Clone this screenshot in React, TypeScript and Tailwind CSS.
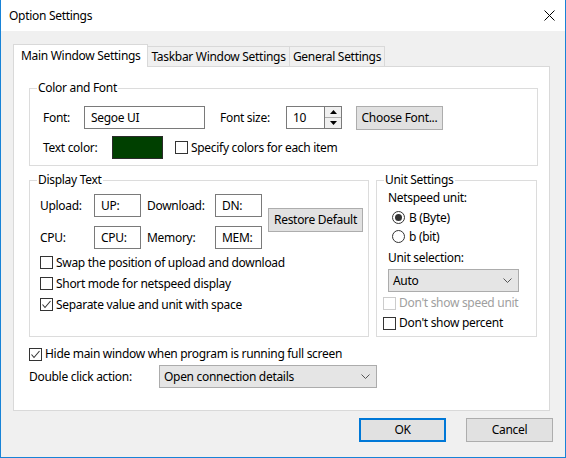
import React from "react";

const font = { fontFamily: '"Noto Sans", "Segoe UI", Arial, sans-serif' };

function CheckBox({ checked = false, disabled = false }: { checked?: boolean; disabled?: boolean }) {
  return (
    <span
      className={`w-[13px] h-[13px] shrink-0 border bg-white flex items-center justify-center ${
        disabled ? "border-[#cccccc]" : "border-[#333333]"
      }`}
    >
      {checked && (
        <svg width="11" height="11" viewBox="0 0 11 11">
          <polyline points="1.5,5.5 4,8.5 9.5,2" fill="none" stroke="#333" strokeWidth="1.1" />
        </svg>
      )}
    </span>
  );
}

function CheckRow({
  label,
  checked = false,
  disabled = false,
  className = "",
}: {
  label: string;
  checked?: boolean;
  disabled?: boolean;
  className?: string;
}) {
  return (
    <div className={`flex items-center gap-[3px] ${className}`}>
      <CheckBox checked={checked} disabled={disabled} />
      <span className={disabled ? "text-[#a0a0a0]" : "text-black"}>{label}</span>
    </div>
  );
}

function Radio({ label, checked = false }: { label: string; checked?: boolean }) {
  return (
    <div className="flex items-center gap-[4px] h-[19px]">
      <span className="w-[13px] h-[13px] rounded-full border border-[#333333] bg-white flex items-center justify-center">
        {checked && <span className="w-[7px] h-[7px] rounded-full bg-[#333333]" />}
      </span>
      <span>{label}</span>
    </div>
  );
}

function TextBox({ value, w }: { value: string; w: string }) {
  return (
    <div className={`${w} h-[23px] border border-[#7a7a7a] bg-white flex items-center pl-[6px]`}>{value}</div>
  );
}

function Chevron() {
  return (
    <svg width="9" height="5" viewBox="0 0 9 5">
      <polyline points="0.5,0.5 4.5,4.5 8.5,0.5" fill="none" stroke="#555" strokeWidth="1" />
    </svg>
  );
}

function Select({ value, w }: { value: string; w: string }) {
  return (
    <div
      className={`${w} h-[23px] border border-[#acacac] bg-[#e5e5e5] flex items-center justify-between pl-[4px] pr-[6px]`}
    >
      <span>{value}</span>
      <Chevron />
    </div>
  );
}

function Button({ label, w, primary = false }: { label: string; w: string; primary?: boolean }) {
  return (
    <div
      className={`${w} h-[24px] bg-[#e1e1e1] flex items-center justify-center ${
        primary ? "border-2 border-[#0078d7]" : "border border-[#adadad]"
      }`}
    >
      {label}
    </div>
  );
}

function Group({ title, className, children }: { title: string; className: string; children: React.ReactNode }) {
  return (
    <div className={`relative border border-[#dcdcdc] ${className}`}>
      <span className="absolute -top-[9px] left-[7px] bg-white px-[1px] leading-[16px]">{title}</span>
      {children}
    </div>
  );
}

export default function App() {
  return (
    <div
      style={font}
      className="w-[566px] h-[458px] flex flex-col bg-[#f0f0f0] border-x border-b border-[#1883d7] text-[12px] tracking-[-0.3px] whitespace-nowrap text-black overflow-hidden"
    >
      {/* Title bar */}
      <div className="h-[31px] bg-white flex items-center justify-between pl-[8px] pr-[10px] shrink-0">
        <span>Option Settings</span>
        <svg width="11" height="11" viewBox="0 0 11 11">
          <line x1="0.5" y1="0.5" x2="10.5" y2="10.5" stroke="#000" strokeWidth="1" />
          <line x1="10.5" y1="0.5" x2="0.5" y2="10.5" stroke="#000" strokeWidth="1" />
        </svg>
      </div>

      <div className="px-[12px] pt-[13px] flex flex-col">
        {/* Tabs */}
        <div className="h-[22px] flex items-end">
          <div className="relative z-10 -mb-px h-[23px] w-[135px] bg-white border-t border-x border-[#d9d9d9] flex items-center pl-[7px]">
            Main Window Settings
          </div>
          <div className="h-[20px] w-[142px] border-t border-r border-[#d9d9d9] flex items-center justify-center">
            Taskbar Window Settings
          </div>
          <div className="h-[20px] w-[95px] border-t border-r border-[#d9d9d9] flex items-center justify-center">
            General Settings
          </div>
        </div>

        {/* Tab panel */}
        <div className="w-[537px] h-[345px] bg-white border border-[#d9d9d9] pl-[15px] pt-[21px] flex flex-col">
          <Group title="Color and Font" className="w-[509px] h-[78px] pl-[13px] pt-[17px] flex flex-col gap-[7px]">
            <div className="h-[23px] flex items-center">
              <span className="w-[41px]">Font:</span>
              <TextBox value="Segoe UI" w="w-[121px]" />
              <span className="ml-[15px] w-[66px]">Font size:</span>
              <div className="w-[39px] h-[23px] border border-[#7a7a7a] bg-white flex items-center pl-[6px]">10</div>
              <div className="w-[17px] h-[23px] flex flex-col border-y border-r border-[#7a7a7a]">
                <div className="flex-1 bg-[#f0f0f0] border-b border-[#adadad] flex items-center justify-center">
                  <svg width="7" height="4" viewBox="0 0 7 4">
                    <polygon points="0,4 7,4 3.5,0" fill="#000" />
                  </svg>
                </div>
                <div className="flex-1 bg-[#f0f0f0] flex items-center justify-center">
                  <svg width="7" height="4" viewBox="0 0 7 4">
                    <polygon points="0,0 7,0 3.5,4" fill="#000" />
                  </svg>
                </div>
              </div>
              <div className="ml-[14px]">
                <Button label="Choose Font..." w="w-[87px]" />
              </div>
            </div>
            <div className="h-[23px] flex items-center">
              <span className="w-[69px]">Text color:</span>
              <div className="w-[51px] h-[23px] bg-[#004000] border border-[#2a2a2a]" />
              <CheckRow label="Specify colors for each item" className="ml-[12px]" />
            </div>
          </Group>

          <div className="mt-[14px] flex gap-[7px]">
            <Group title="Display Text" className="w-[340px] h-[157px] pl-[10px] pt-[13px] flex flex-col">
              <div className="flex items-center">
                <div className="flex flex-col gap-[9px]">
                  <div className="flex items-center h-[23px]">
                    <span className="w-[54px]">Upload:</span>
                    <TextBox value="UP:" w="w-[47px]" />
                    <span className="ml-[6px] w-[68px]">Download:</span>
                    <TextBox value="DN:" w="w-[47px]" />
                  </div>
                  <div className="flex items-center h-[23px]">
                    <span className="w-[54px]">CPU:</span>
                    <TextBox value="CPU:" w="w-[47px]" />
                    <span className="ml-[6px] w-[68px]">Memory:</span>
                    <TextBox value="MEM:" w="w-[47px]" />
                  </div>
                </div>
                <div className="ml-[6px] -mt-[3px]">
                  <Button label="Restore Default" w="w-[95px]" />
                </div>
              </div>
              <div className="mt-[3px] flex flex-col">
                <CheckRow label="Swap the position of upload and download" className="h-[21px]" />
                <CheckRow label="Short mode for netspeed display" className="h-[21px]" />
                <CheckRow label="Separate value and unit with space" checked className="h-[21px]" />
              </div>
            </Group>

            <Group title="Unit Settings" className="w-[161px] h-[157px] pl-[6px] pt-[9px] flex flex-col">
              <div className="ml-[5px] h-[16px] flex items-center">Netspeed unit:</div>
              <div className="ml-[9px] mt-[2px] flex flex-col">
                <Radio label="B (Byte)" checked />
                <Radio label="b (bit)" />
              </div>
              <div className="ml-[5px] mt-[4px] h-[16px] flex items-center">Unit selection:</div>
              <div className="ml-[5px] mt-[3px]">
                <Select value="Auto" w="w-[131px]" />
              </div>
              <CheckRow label="Don't show speed unit" disabled className="mt-[1px] h-[20px]" />
              <CheckRow label="Don't show percent" className="h-[20px]" />
            </Group>
          </div>

          <CheckRow label="Hide main window when program is running full screen" checked className="mt-[9px] h-[16px]" />
          <div className="mt-[3px] flex items-center">
            <span className="w-[130px]">Double click action:</span>
            <Select value="Open connection details" w="w-[218px]" />
          </div>
        </div>

        {/* Dialog buttons */}
        <div className="mt-[7px] flex justify-end gap-[20px]">
          <Button label="OK" w="w-[87px]" primary />
          <Button label="Cancel" w="w-[87px]" />
        </div>
      </div>
    </div>
  );
}
